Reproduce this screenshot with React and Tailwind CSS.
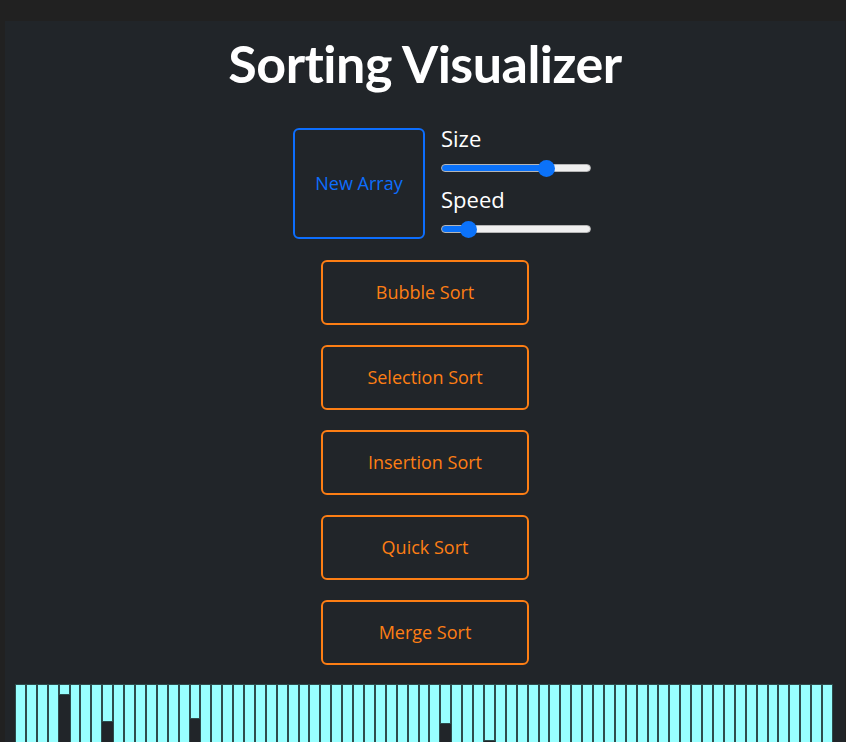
import { useState } from 'react'

const SORTS = ['Bubble Sort', 'Selection Sort', 'Insertion Sort', 'Quick Sort', 'Merge Sort']

// heights in px; most bars run past the bottom of the window
const SHORT = { 4: 11, 8: 38, 16: 35, 39: 40, 43: 57 }
const BARS = Array.from({ length: 75 }, (_, i) => SHORT[i] ?? 80 + ((i * 137) % 300))

function Slider({ value, onChange }) {
  const fill = `linear-gradient(to right, #0b72f9 0%, #0b72f9 ${value}%, #efefef ${value}%, #efefef 100%)`
  return (
    <input
      type="range"
      min="0"
      max="100"
      value={value}
      onChange={e => onChange(+e.target.value)}
      style={{ background: fill }}
      className="h-2 w-[150px] cursor-pointer appearance-none rounded-full border border-[#b5b5b5] outline-none [&::-webkit-slider-thumb]:h-[17px] [&::-webkit-slider-thumb]:w-[17px] [&::-webkit-slider-thumb]:appearance-none [&::-webkit-slider-thumb]:rounded-full [&::-webkit-slider-thumb]:bg-[#0b72f9]"
    />
  )
}

export default function App() {
  const [size, setSize] = useState(73)
  const [speed, setSpeed] = useState(14)

  return (
    <div className="min-h-screen bg-[#212121] pl-[5px] pr-[1px] pt-[21px]" style={{ fontFamily: '"Open Sans", "Noto Sans", sans-serif' }}>
      <div className="min-h-[721px] bg-[#212529] pb-4">
        <h1
          className="pt-[12px] text-center text-[52px] font-bold leading-[60px] tracking-[-0.5px] text-white"
          style={{ fontFamily: 'Lato, "Open Sans", sans-serif' }}
        >
          Sorting Visualizer
        </h1>

        <div className="mt-[35px] flex justify-center pl-[34px]">
          <div className="flex gap-4">
            <button className="flex h-[111px] w-[132px] items-center justify-center rounded-md border-2 border-[#0d6efd] text-[18px] text-[#0d6efd]">
              New Array
            </button>
            <div className="-mt-1 flex flex-col items-start">
              <label className="text-[22px] leading-[28px] text-white">Size</label>
              <div className="mt-2 flex h-4 items-center">
                <Slider value={size} onChange={setSize} />
              </div>
              <label className="mt-[9px] text-[22px] leading-[28px] text-white">Speed</label>
              <div className="mt-2 flex h-4 items-center">
                <Slider value={speed} onChange={setSpeed} />
              </div>
            </div>
          </div>
        </div>

        <div className="mt-[21px] flex flex-col items-center gap-5">
          {SORTS.map(s => (
            <button
              key={s}
              className="h-[65px] w-[208px] rounded-md border-2 border-[#fd7e14] text-[18px] text-[#fd7e14]"
            >
              {s}
            </button>
          ))}
        </div>

        <div className="ml-[10px] mt-[19px] flex h-[58px] w-[818px] items-start overflow-hidden">
          {BARS.map((h, i) => (
            <div
              key={i}
              className="flex-1 border border-black/70 bg-[#98ffff]"
              style={{ height: h }}
            />
          ))}
        </div>
      </div>
    </div>
  )
}
